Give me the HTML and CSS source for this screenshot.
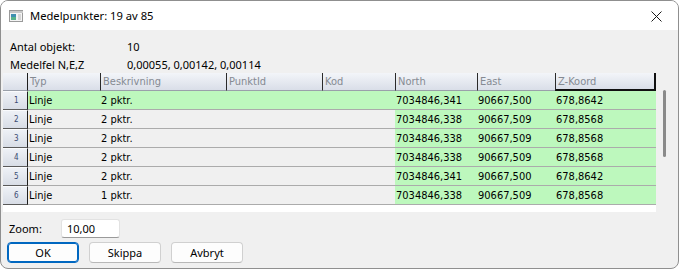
FILE: index.html
```html
<!DOCTYPE html>
<html>
<head>
<meta charset="utf-8">
<link rel="stylesheet" href="styles.css">
</head>
<body>
<div class="window">
  <div class="titlebar">
    <svg class="app-icon" width="14" height="12" viewBox="0 0 14 12">
      <rect x="0.5" y="0.5" width="13" height="11" fill="#f4f4f4" stroke="#9a9a9a"/>
      <rect x="1" y="1" width="13" height="2" fill="#c8c8c8"/>
      <rect x="2" y="4" width="5" height="6" fill="#3f8fb0"/>
      <rect x="2" y="7" width="5" height="3" fill="#58b38a"/>
      <rect x="9" y="4" width="3" height="6" fill="#d6d6d6"/>
    </svg>
    <span class="title">Medelpunkter: 19 av 85</span>
    <svg class="close" width="11" height="11" viewBox="0 0 11 11">
      <path d="M0.5 0.5 L10.5 10.5 M10.5 0.5 L0.5 10.5" stroke="#1a1a1a" stroke-width="1" fill="none"/>
    </svg>
  </div>
  <div class="body">
    <div class="info">
      <div class="info-row"><span class="lbl">Antal objekt:</span><span>10</span></div>
      <div class="info-row"><span class="lbl">Medelfel N,E,Z</span><span>0,00055, 0,00142, 0,00114</span></div>
    </div>
    <div class="grid-area">
      <div class="grid">
        <div class="hd corner"></div>
        <div class="hd">Typ</div>
        <div class="hd">Beskrivning</div>
        <div class="hd">PunktId</div>
        <div class="hd">Kod</div>
        <div class="hd">North</div>
        <div class="hd">East</div>
        <div class="hd last">Z-Koord</div>

        <div class="rh"><span>1</span></div>
        <div class="c g">Linje</div><div class="c g">2 pktr.</div><div class="c g"></div><div class="c g"></div>
        <div class="c g">7034846,341</div><div class="c g">90667,500</div><div class="c g">678,8642</div>

        <div class="rh"><span>2</span></div>
        <div class="c">Linje</div><div class="c">2 pktr.</div><div class="c"></div><div class="c"></div>
        <div class="c g">7034846,338</div><div class="c g">90667,509</div><div class="c g">678,8568</div>

        <div class="rh"><span>3</span></div>
        <div class="c">Linje</div><div class="c">2 pktr.</div><div class="c"></div><div class="c"></div>
        <div class="c g">7034846,338</div><div class="c g">90667,509</div><div class="c g">678,8568</div>

        <div class="rh"><span>4</span></div>
        <div class="c">Linje</div><div class="c">2 pktr.</div><div class="c"></div><div class="c"></div>
        <div class="c g">7034846,338</div><div class="c g">90667,509</div><div class="c g">678,8568</div>

        <div class="rh"><span>5</span></div>
        <div class="c">Linje</div><div class="c">2 pktr.</div><div class="c"></div><div class="c"></div>
        <div class="c g">7034846,341</div><div class="c g">90667,500</div><div class="c g">678,8642</div>

        <div class="rh"><span>6</span></div>
        <div class="c">Linje</div><div class="c">1 pktr.</div><div class="c"></div><div class="c"></div>
        <div class="c g">7034846,338</div><div class="c g">90667,509</div><div class="c g">678,8568</div>
      </div>
      <div class="vscroll"><div class="thumb"></div></div>
    </div>
    <div class="zoom-row">
      <span class="zoom-lbl">Zoom:</span>
      <div class="input">10,00</div>
    </div>
    <div class="buttons">
      <div class="btn primary">OK</div>
      <div class="btn">Skippa</div>
      <div class="btn">Avbryt</div>
    </div>
  </div>
</div>
</body>
</html>
```
FILE: styles.css
```css
* { box-sizing: border-box; }
body {
  margin: 0;
  background: #ffffff;
  font-family: "Segoe UI", "Noto Sans", sans-serif;
  font-size: 11px;
  color: #000;
}
.window {
  width: 679px;
  height: 269px;
  border: 1px solid #8f8f8f;
  border-radius: 8px;
  overflow: hidden;
  background: #f0f0f0;
  display: flex;
  flex-direction: column;
}
.titlebar {
  height: 29px;
  flex-shrink: 0;
  background: #ffffff;
  display: flex;
  align-items: center;
}
.app-icon { margin-left: 8px; margin-top: 1px; }
.title { margin-left: 7px; font-size: 11.2px; }
.close { margin-left: auto; margin-right: 16px; margin-top: 1px; }

.body { padding: 7px 0 0 2px; }
.info-row {
  display: flex;
  align-items: center;
  height: 18px;
  padding-left: 7px;
}
.lbl { width: 117px; }

.grid-area { display: flex; }
.grid {
  width: 653px;
  background: #ffffff;
  padding-bottom: 7px;
  display: grid;
  grid-template-columns: 25px 72px 126px 96px 73px 82px 78px 101px;
  grid-template-rows: 18px;
  grid-auto-rows: 19px;
  font-family: "DejaVu Sans Condensed", "DejaVu Sans", sans-serif;
  font-size: 11px;
}
.hd {
  background: linear-gradient(#f3f5f9, #d9dee8);
  border-left: 1px solid #2a2a2a;
  border-bottom: 1px solid #9aa0aa;
  color: #858a92;
  padding-left: 2px;
  display: flex;
  align-items: center;
  white-space: nowrap;
  overflow: hidden;
}
.hd.corner { border-left: none; border-right: 1px solid #1e1e1e; }
.hd.corner + .hd { border-left: none; }
.hd.last { border-right: 2px solid #111; border-bottom: 2px solid #111; }
.rh {
  background: linear-gradient(#eef1f6, #d8dde6);
  border-right: 1px solid #1e1e1e;
  border-bottom: 1px solid #5a5a5a;
  border-top: 1px solid #fafbfd;
  display: flex;
  align-items: flex-end;
  padding: 0 0 3px 11px;
}
.rh span { font-size: 8px; color: #3a4a72; line-height: 10px; }
.c {
  background: #f0f0f0;
  border-bottom: 1px solid #ababab;
  padding-left: 1px;
  display: flex;
  align-items: center;
  white-space: nowrap;
}
.c.g { background: #bdf8bd; }

.vscroll { flex: 1; }
.thumb {
  margin-left: 7px;
  margin-top: 17px;
  width: 3px;
  height: 67px;
  background: #8a8a8a;
  border-radius: 2px;
}

.zoom-row {
  margin-top: 7px;
  height: 19px;
  display: flex;
  align-items: center;
  padding-left: 6px;
}
.zoom-lbl { width: 52px; }
.input {
  width: 59px;
  height: 19px;
  background: #ffffff;
  border: 1px solid #e2e2e2;
  border-bottom-color: #9a9a9a;
  border-radius: 3px;
  padding-left: 5px;
  display: flex;
  align-items: center;
}
.buttons {
  margin-top: 4px;
  display: flex;
  gap: 10px;
  padding-left: 4px;
}
.btn {
  width: 72px;
  height: 21px;
  background: #fdfdfd;
  border: 1px solid #d0d0d0;
  border-bottom-color: #b8b8b8;
  border-radius: 4px;
  display: flex;
  align-items: center;
  justify-content: center;
}
.btn.primary { border: 1px solid #0067c0; box-shadow: inset 0 0 0 1px #0067c0; }
```
